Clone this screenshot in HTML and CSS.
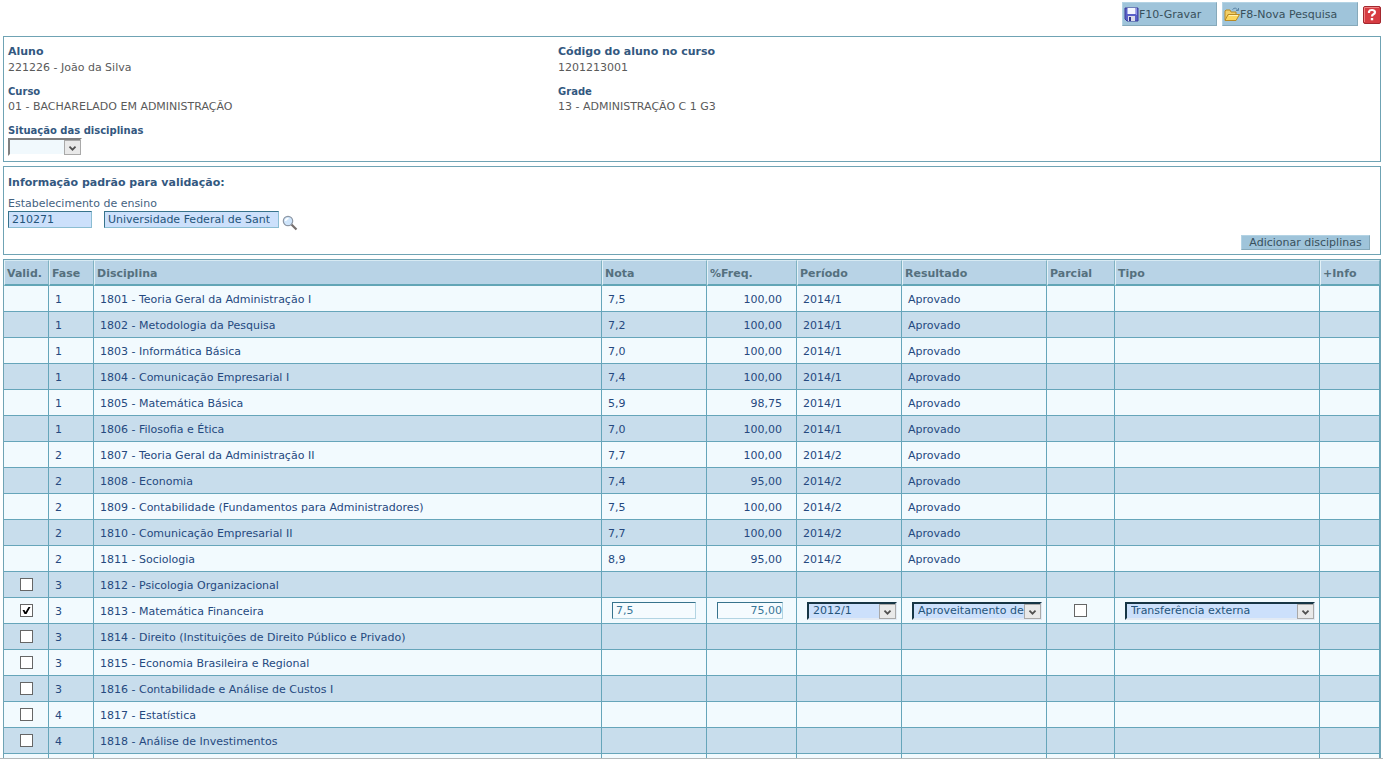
FILE: index.html
```html
<!DOCTYPE html>
<html lang="pt-BR">
<head>
<meta charset="utf-8">
<title>Validação de disciplinas</title>
<link rel="stylesheet" href="styles.css">
</head>
<body>
<main class="page">
<header class="toolbar">
  <button class="tool-btn tool-save" type="button">
    <svg class="icon" width="15" height="15" viewBox="0 0 15 15" aria-hidden="true"><path d="M1 1h13v13H3l-2-2z" fill="#5a60c8" stroke="#3a3c98"/><path d="M3.500 1h8v6h-8z" fill="#f4f6ff"/><path d="M12 1h1v7h-1z" fill="#8e92ea"/><path d="M4 9h7v5H4z" fill="#d9dbea"/><path d="M5 10h2v4H5z" fill="#33358c"/></svg>F10-Gravar</button>
  <button class="tool-btn tool-search" type="button">
    <svg class="icon" width="16" height="15" viewBox="0 0 16 15" aria-hidden="true"><path d="M1 13V4l1-1h4l1 2h5v3" fill="#f1cf67" stroke="#b98a22"/><path d="M1 13.500 4 7.500h11.500l-3.500 6z" fill="#fbd65c" stroke="#b98a22"/><path d="M5 8.500h9" stroke="#fff2b4"/><path d="M8.500 2.500q3-3 5 .5M14.500 1v2.500H12" fill="none" stroke="#5a84a6"/></svg>F8-Nova Pesquisa</button>
  <button class="help" type="button" aria-label="Ajuda">
    <svg class="help-icon" width="18" height="18" viewBox="0 0 18 18" aria-hidden="true"><rect x=".5" y=".5" width="17" height="17" rx="1.500" fill="#d63c42" stroke="#a3282f"/><path d="M1.500 16V1.500H16" fill="none" stroke="#ef8584"/><path d="M6 7V5.500Q6.500 4 9 4t3 2q0 1.500-1.500 2.300T9 10.500" fill="none" stroke="#fff" stroke-width="2.200"/><path d="M7.800 12h2.400v2.300H7.800z" fill="#fff"/></svg>
  </button>
</header>

<section class="panel student">
  <div class="info"><h2 class="title">Aluno</h2><p class="value">221226 - João da Silva</p></div>
  <div class="info"><h2 class="title">Código do aluno no curso</h2><p class="value">1201213001</p></div>
  <div class="info"><h3 class="subtitle">Curso</h3><p class="value">01 - BACHARELADO EM ADMINISTRAÇÃO</p></div>
  <div class="info"><h3 class="subtitle">Grade</h3><p class="value">13 - ADMINISTRAÇÃO C 1 G3</p></div>
  <div class="info">
    <label class="subtitle" for="situacao">Situação das disciplinas</label>
    <span class="drop drop-status"><select id="situacao"><option></option></select><svg class="arrow" viewBox="0 0 17 15" aria-hidden="true"><path d="M5 6.500 8.500 10 12 6.500"/></svg></span>
  </div>
</section>

<section class="panel defaults">
  <h2 class="title">Informação padrão para validação:</h2>
  <label class="caption" for="codigo">Estabelecimento de ensino</label>
  <div class="lookup">
    <input class="field code" id="codigo" type="text" value="210271">
    <input class="field school" type="text" aria-label="Nome do estabelecimento" value="Universidade Federal de Santa Catarina">
    <button class="find" type="button" aria-label="Pesquisar"><svg class="icon" width="16" height="16" viewBox="0 0 16 16" aria-hidden="true"><path d="m9.500 9.500 5 5" stroke="#77706e" stroke-width="2.200"/><circle cx="6" cy="6" r="4.700" fill="#cfe5fb" stroke="#8d97a5" stroke-width="1.200"/><path d="M3.500 6Q4 3.500 6.500 3.500" fill="none" stroke="#fff" stroke-width="1.500"/></svg></button>
  </div>
  <button class="add" type="button">Adicionar disciplinas</button>
</section>

<div class="grid">
<table>
<colgroup><col class="w-valid"><col class="w-fase"><col><col class="w-nota"><col class="w-freq"><col class="w-periodo"><col class="w-resultado"><col class="w-parcial"><col class="w-tipo"><col class="w-info"></colgroup>
<thead><tr><th>Valid.</th><th>Fase</th><th>Disciplina</th><th>Nota</th><th>%Freq.</th><th>Período</th><th>Resultado</th><th>Parcial</th><th>Tipo</th><th>+Info</th></tr></thead>
<tbody>
<tr><td></td><td>1</td><td>1801 - Teoria Geral da Administração I</td><td>7,5</td><td class="num">100,00</td><td>2014/1</td><td>Aprovado</td><td></td><td></td><td></td></tr>
<tr><td></td><td>1</td><td>1802 - Metodologia da Pesquisa</td><td>7,2</td><td class="num">100,00</td><td>2014/1</td><td>Aprovado</td><td></td><td></td><td></td></tr>
<tr><td></td><td>1</td><td>1803 - Informática Básica</td><td>7,0</td><td class="num">100,00</td><td>2014/1</td><td>Aprovado</td><td></td><td></td><td></td></tr>
<tr><td></td><td>1</td><td>1804 - Comunicação Empresarial I</td><td>7,4</td><td class="num">100,00</td><td>2014/1</td><td>Aprovado</td><td></td><td></td><td></td></tr>
<tr><td></td><td>1</td><td>1805 - Matemática Básica</td><td>5,9</td><td class="num">98,75</td><td>2014/1</td><td>Aprovado</td><td></td><td></td><td></td></tr>
<tr><td></td><td>1</td><td>1806 - Filosofia e Ética</td><td>7,0</td><td class="num">100,00</td><td>2014/1</td><td>Aprovado</td><td></td><td></td><td></td></tr>
<tr><td></td><td>2</td><td>1807 - Teoria Geral da Administração II</td><td>7,7</td><td class="num">100,00</td><td>2014/2</td><td>Aprovado</td><td></td><td></td><td></td></tr>
<tr><td></td><td>2</td><td>1808 - Economia</td><td>7,4</td><td class="num">95,00</td><td>2014/2</td><td>Aprovado</td><td></td><td></td><td></td></tr>
<tr><td></td><td>2</td><td>1809 - Contabilidade (Fundamentos para Administradores)</td><td>7,5</td><td class="num">100,00</td><td>2014/2</td><td>Aprovado</td><td></td><td></td><td></td></tr>
<tr><td></td><td>2</td><td>1810 - Comunicação Empresarial II</td><td>7,7</td><td class="num">100,00</td><td>2014/2</td><td>Aprovado</td><td></td><td></td><td></td></tr>
<tr><td></td><td>2</td><td>1811 - Sociologia</td><td>8,9</td><td class="num">95,00</td><td>2014/2</td><td>Aprovado</td><td></td><td></td><td></td></tr>
<tr><td class="mid"><input class="check" type="checkbox" aria-label="Validar 1812"></td><td>3</td><td>1812 - Psicologia Organizacional</td><td></td><td></td><td></td><td></td><td></td><td></td><td></td></tr>
<tr><td class="mid"><input class="check" type="checkbox" aria-label="Validar 1813" checked></td><td>3</td><td>1813 - Matemática Financeira</td>
<td class="edit"><input class="field light nota" type="text" aria-label="Nota" value="7,5"></td>
<td class="edit"><input class="field light freq" type="text" aria-label="Frequência" value="75,00"></td>
<td class="edit"><span class="drop drop-cell"><select aria-label="Período"><option>2012/1</option></select><svg class="arrow" viewBox="0 0 17 15" aria-hidden="true"><path d="M5 6.500 8.500 10 12 6.500"/></svg></span></td>
<td class="edit"><span class="drop drop-cell"><select aria-label="Resultado"><option>Aproveitamento de disciplina</option></select><svg class="arrow" viewBox="0 0 17 15" aria-hidden="true"><path d="M5 6.500 8.500 10 12 6.500"/></svg></span></td>
<td class="mid"><input class="check" type="checkbox" aria-label="Parcial"></td>
<td class="edit"><span class="drop drop-cell"><select aria-label="Tipo"><option>Transferência externa</option></select><svg class="arrow" viewBox="0 0 17 15" aria-hidden="true"><path d="M5 6.500 8.500 10 12 6.500"/></svg></span></td><td></td></tr>
<tr><td class="mid"><input class="check" type="checkbox" aria-label="Validar 1814"></td><td>3</td><td>1814 - Direito (Instituições de Direito Público e Privado)</td><td></td><td></td><td></td><td></td><td></td><td></td><td></td></tr>
<tr><td class="mid"><input class="check" type="checkbox" aria-label="Validar 1815"></td><td>3</td><td>1815 - Economia Brasileira e Regional</td><td></td><td></td><td></td><td></td><td></td><td></td><td></td></tr>
<tr><td class="mid"><input class="check" type="checkbox" aria-label="Validar 1816"></td><td>3</td><td>1816 - Contabilidade e Análise de Custos I</td><td></td><td></td><td></td><td></td><td></td><td></td><td></td></tr>
<tr><td class="mid"><input class="check" type="checkbox" aria-label="Validar 1817"></td><td>4</td><td>1817 - Estatística</td><td></td><td></td><td></td><td></td><td></td><td></td><td></td></tr>
<tr><td class="mid"><input class="check" type="checkbox" aria-label="Validar 1818"></td><td>4</td><td>1818 - Análise de Investimentos</td><td></td><td></td><td></td><td></td><td></td><td></td><td></td></tr>
<tr><td></td><td></td><td></td><td></td><td></td><td></td><td></td><td></td><td></td><td></td></tr>
</tbody>
</table>
</div>
</main>
</body>
</html>
```

FILE: styles.css
```css
* { box-sizing: border-box; }

body {
  margin: 0;
  background: #fff;
  color: #5a5a5a;
  font: 11px/15px Verdana, "DejaVu Sans", sans-serif;
}

h2, h3, p { margin: 0; }

button, input, select { font: inherit; }

.page {
  height: 100vh;
  overflow: hidden;
  padding: 2px 2px 0 3px;
  border-bottom: 1px solid #b4b8ba;
}

.toolbar {
  display: flex;
  justify-content: flex-end;
  gap: 5px;
  height: 34px;
}

.tool-btn {
  display: flex;
  align-items: center;
  height: 24px;
  padding: 0 0 0 1px;
  border: 1px solid;
  border-color: #b3d3e4 #86a9ba #86a9ba #b3d3e4;
  background: #9fc4da;
  color: #38505c;
  white-space: nowrap;
}

.tool-save { width: 95px; }
.tool-search { width: 136px; }
.icon { display: block; flex: none; }

.help {
  align-self: flex-start;
  margin-top: 4px;
  padding: 0;
  border: 0;
  background: none;
}

.help-icon { display: block; }

.panel {
  margin-bottom: 4px;
  padding: 8px 10px 4px 4px;
  border: 1px solid #6fa3b4;
}

.student {
  display: grid;
  grid-template-columns: 550px 1fr;
  row-gap: 9px;
  padding-top: 7px;
  padding-bottom: 5px;
}

.title {
  color: #33587f;
  font-size: 11px;
  line-height: 16px;
}

.subtitle {
  display: block;
  color: #33587f;
  font-size: 10px;
  font-weight: bold;
  line-height: 15px;
}

.value { line-height: 15px; }

.defaults {
  display: flex;
  flex-direction: column;
  align-items: flex-start;
}

.caption {
  margin-top: 6px;
  color: #44627f;
  line-height: 14px;
}

.lookup { display: flex; }

.field {
  height: 17px;
  padding: 0 0 0 3px;
  border: 1px solid;
  border-color: #37738c #8bbdd2 #8bbdd2 #37738c;
  background: #cce0fb;
  color: #24547a;
}

.code { width: 84px; margin-right: 12px; }
.school { width: 175px; margin-right: 3px; padding-right: 8px; }

.find {
  height: 16px;
  margin-top: 4px;
  padding: 0;
  border: 0;
  background: none;
}

.add {
  align-self: flex-end;
  width: 129px;
  height: 15px;
  margin-top: 4px;
  padding: 0;
  border: 1px solid;
  border-color: #b3d3e4 #86a9ba #86a9ba #b3d3e4;
  background: #9fc4da;
  color: #38505c;
  line-height: 13px;
  white-space: nowrap;
}

.drop { display: block; position: relative; }

.drop select {
  display: block;
  width: 100%;
  height: 18px;
  padding: 0 0 0 4px;
  border: 2px solid;
  border-color: #163545 #e2eaf4 #e2eaf4 #163545;
  border-radius: 0;
  background: #cce0fb;
  color: #24547a;
  line-height: 14px;
  appearance: none;
}

.drop-status { width: 74px; }

.drop-status select {
  border-color: #808080 #fff #fff #808080;
  background: #f1f9fd;
}

.arrow {
  position: absolute;
  top: 2px;
  right: 1px;
  width: 17px;
  height: 15px;
  border: 1px solid #a9a9a9;
  background: #e9e9e9;
  fill: none;
  stroke: #505050;
  stroke-width: 2;
  pointer-events: none;
}

.grid {
  border: 1px solid #6fa3b4;
  border-bottom: 0;
}

table {
  width: 100%;
  border-spacing: 0;
  table-layout: fixed;
}

.w-valid, .w-fase { width: 45px; }
.w-nota, .w-periodo { width: 105px; }
.w-freq { width: 90px; }
.w-resultado { width: 145px; }
.w-parcial { width: 68px; }
.w-tipo { width: 205px; }
.w-info { width: 60px; }

th {
  height: 26px;
  padding: 1px 0 0 2px;
  border: 1px solid;
  border-color: #d7eaf3 #7fb2c2 #62a5b6 #e3f1f7;
  border-bottom-width: 2px;
  background: #b8d3e6;
  color: #55707e;
  text-align: left;
}

td {
  height: 26px;
  padding: 1px 6px 0;
  border: solid #66a5ba;
  border-width: 0 1px 1px 0;
  background: #f2fafe;
  color: #25497f;
  white-space: nowrap;
}

tr:nth-child(even) td { background: #c8ddec; }

td.num { padding-right: 14px; text-align: right; }
td.mid { padding: 0; text-align: center; }
td.edit { padding: 0 4px 0 10px; }

.light {
  display: block;
  border-color: #37738c #b2d4e2 #b2d4e2 #37738c;
  background: #f5fbfe;
  color: #3a7697;
}

.nota { width: 84px; }
.freq { width: 66px; padding: 0; text-align: right; }

.check {
  display: block;
  width: 13px;
  height: 13px;
  margin: 0 auto;
  border: 1px solid #666;
  background: #fff;
  appearance: none;
}

.check:checked::before {
  content: "";
  display: block;
  height: 11px;
  background: #000;
  clip-path: polygon(2px 5px, 4px 5px, 5px 7px, 8px 2px, 10px 2px, 6px 9px, 4px 9px);
}
```
